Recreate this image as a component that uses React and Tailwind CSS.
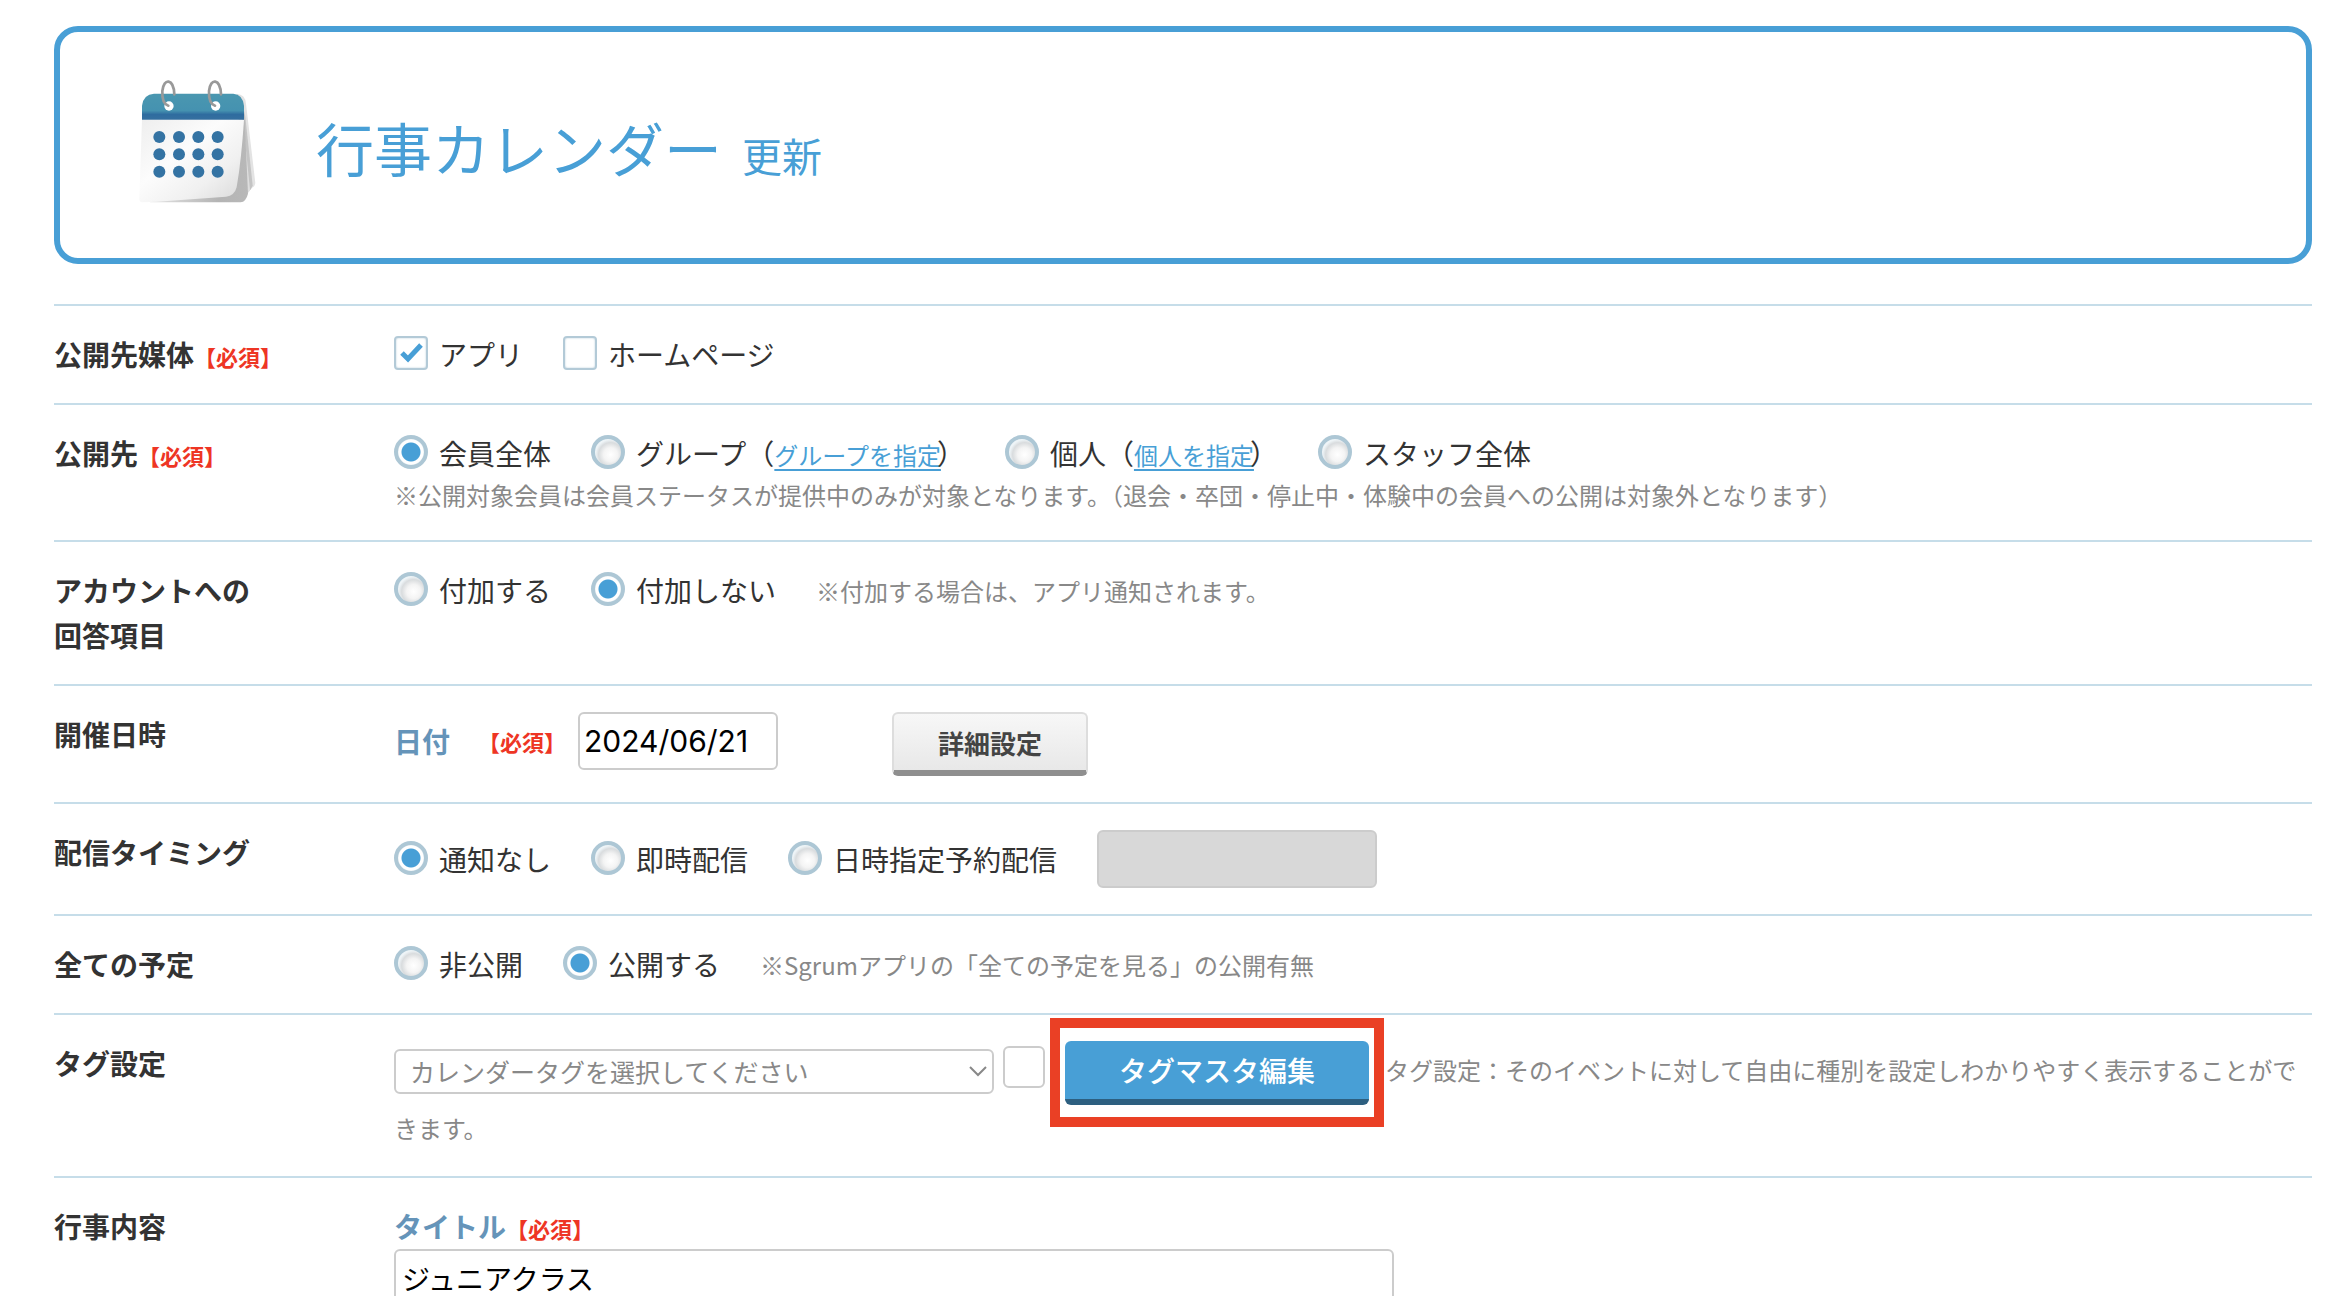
import { useState } from 'react';

function CalendarIcon() {
  const cols = [118, 177, 235, 293];
  const rows = [200, 252, 304];

  return (
    <svg className="mb-2 h-[124px] w-[118px] shrink-0" viewBox="54 26 354 372" aria-hidden="true">
      <defs>
        <linearGradient id="calTop" x1="0" y1="0" x2="0" y2="1">
          <stop offset="0" stopColor="#4a97b0" />
          <stop offset="0.65" stopColor="#4592b0" />
          <stop offset="0.8" stopColor="#2f6c9f" />
          <stop offset="1" stopColor="#356f9f" />
        </linearGradient>
        <linearGradient id="calPage" x1="0" y1="0" x2="1" y2="1">
          <stop offset="0" stopColor="#eeeeee" />
          <stop offset="0.4" stopColor="#fcfcfc" />
          <stop offset="0.7" stopColor="#f0f0f0" />
          <stop offset="1" stopColor="#d8d8d8" />
        </linearGradient>
        <linearGradient id="calFold" x1="0" y1="0" x2="1" y2="0">
          <stop offset="0" stopColor="#e4e4e4" />
          <stop offset="0.7" stopColor="#b4b4b4" />
          <stop offset="1" stopColor="#b8b8b8" />
        </linearGradient>
      </defs>
      {/* pages behind */}
      <path d="M350 70 Q376 72 378 100 L406 338 Q404 350 396 352 L370 330 Z" fill="#e3e3e3" />
      <path d="M365 90 L376 140 L398 345 Q394 360 386 362 L370 330 Z" fill="#c4c4c4" />
      <path d="M368 140 L390 358 Q388 368 380 370 L370 330 Z" fill="#dedede" />
      <path d="M370 150 L374 150 L384 370 Q378 394 362 396 L90 396 Z" fill="url(#calFold)" />
      {/* front page */}
      <path d="M66 148 L372 148 Q364 270 350 350 Q344 376 318 379 L110 394 L66 396 Q58 395 58 386 Z" fill="url(#calPage)" />
      <path d="M66 148 V106 Q70 72 102 70 H340 Q368 72 372 106 V148 Z" fill="url(#calTop)" />
      {rows.map((y) => cols.map((x) => <circle key={`${x}-${y}`} cx={x} cy={y} r="18" fill="#3473a3" />))}
      {[146, 286].map((x) => (
        <g key={x}>
          <circle cx={x + 1} cy="107" r="14" fill="#ffffff" />
          <path
            d={`M${x + 17} 72 C${x + 15} 24 ${x - 15} 22 ${x - 19} 62 C${x - 20} 84 ${x - 14} 102 ${x - 1} 106`}
            fill="none"
            stroke="#999999"
            strokeWidth="8"
            strokeLinecap="round"
          />
        </g>
      ))}
    </svg>
  );
}

function Required() {
  return <span className="text-[22px] leading-none font-bold text-[#ee3524]">【必須】</span>;
}

function Row({ label, required, children }) {
  return (
    <div className="flex border-t-2 border-[#c6dde9] py-[26px]">
      <div className="w-[340px] shrink-0 font-bold">
        {label}
        {required && <Required />}
      </div>
      <div className="min-w-0 flex-1">{children}</div>
    </div>
  );
}

function Radio({ name, value, current, onChange, children }) {
  const id = `${name}-${value}`;

  return (
    <div className="flex items-center gap-[11px]">
      <input
        type="radio"
        id={id}
        name={name}
        checked={current === value}
        onChange={() => onChange(value)}
        className="mb-[3px] size-[34px] shrink-0 appearance-none rounded-full border-4 border-[#adc7d5] bg-[radial-gradient(circle_at_60%_60%,#ffffff_0,#f4f4f4_7px,#d9dcde_12px,#eef4f7_15px)] checked:bg-[radial-gradient(circle,#489fd6_0,#489fd6_9px,#ffffff_10px,#ffffff_12px,#dbe7ee_14px)]"
      />
      <label htmlFor={id}>{children}</label>
    </div>
  );
}

function PickLink({ href, children }) {
  return (
    <a href={href} className="-mr-1 text-2xl leading-none text-[#489fd6] underline decoration-2 underline-offset-4">
      {children}
    </a>
  );
}

function Checkbox({ id, checked, onChange, children }) {
  return (
    <div className="flex items-center gap-[11px]">
      <span className="relative mb-[3px] flex">
        <input
          type="checkbox"
          id={id}
          checked={checked}
          onChange={(e) => onChange(e.target.checked)}
          className="size-[34px] appearance-none rounded-[4px] border-2 border-[#b3cad7] bg-white shadow-[inset_0_0_2px_#b3cad7]"
        />
        {checked && (
          <svg className="pointer-events-none absolute inset-0 size-[34px]" viewBox="0 0 34 34" aria-hidden="true">
            <path d="M8 17 L14 23 L27 9" fill="none" stroke="#489fd6" strokeWidth="5" />
          </svg>
        )}
      </span>
      <label htmlFor={id}>{children}</label>
    </div>
  );
}

export default function App() {
  const [media, setMedia] = useState({ app: true, homepage: false });
  const [target, setTarget] = useState('all');
  const [answer, setAnswer] = useState('off');
  const [timing, setTiming] = useState('none');
  const [schedule, setSchedule] = useState('public');
  const [date, setDate] = useState('2024/06/21');
  const [title, setTitle] = useState('ジュニアクラス');

  return (
    <div
      lang="ja"
      className="h-screen overflow-x-hidden overflow-y-auto bg-white pt-[26px] pr-9 pl-[54px] font-['Noto_Sans_CJK_JP',sans-serif] text-[28px] leading-[45px] text-[#333333] [scrollbar-width:none]"
    >
      {/* Header */}
      <header className="mb-10 flex h-[238px] items-center gap-[60px] rounded-3xl border-[6px] border-[#489fd6] px-[78px]">
        <CalendarIcon />
        <h1 className="pt-3 text-[58px] leading-[80px] text-[#489fd6]">
          行事カレンダー<span className="ml-5 text-[40px]">更新</span>
        </h1>
      </header>

      {/* Form */}
      <form onSubmit={(e) => e.preventDefault()}>
        <Row label="公開先媒体" required>
          <div className="flex items-center gap-10">
            <Checkbox id="media-app" checked={media.app} onChange={(v) => setMedia({ ...media, app: v })}>
              アプリ
            </Checkbox>
            <Checkbox id="media-homepage" checked={media.homepage} onChange={(v) => setMedia({ ...media, homepage: v })}>
              ホームページ
            </Checkbox>
          </div>
        </Row>

        <Row label="公開先" required>
          <div className="flex items-center gap-10">
            <Radio name="target" value="all" current={target} onChange={setTarget}>会員全体</Radio>
            <Radio name="target" value="group" current={target} onChange={setTarget}>
              グループ（<PickLink href="#group">グループを指定</PickLink>）
            </Radio>
            <Radio name="target" value="person" current={target} onChange={setTarget}>
              個人（<PickLink href="#person">個人を指定</PickLink>）
            </Radio>
            <Radio name="target" value="staff" current={target} onChange={setTarget}>スタッフ全体</Radio>
          </div>
          <p className="text-2xl leading-[38px] text-[#888888]">
            ※公開対象会員は会員ステータスが提供中のみが対象となります。（退会・卒団・停止中・体験中の会員への公開は対象外となります）
          </p>
        </Row>

        <Row label={<>アカウントへの<br />回答項目</>}>
          <div className="flex items-center gap-10">
            <Radio name="answer" value="on" current={answer} onChange={setAnswer}>付加する</Radio>
            <Radio name="answer" value="off" current={answer} onChange={setAnswer}>付加しない</Radio>
            <span className="text-2xl text-[#888888]">※付加する場合は、アプリ通知されます。</span>
          </div>
        </Row>

        <Row label="開催日時">
          <div className="flex items-start">
            <div className="flex h-[58px] items-center">
              <label htmlFor="date" className="mr-7 font-bold text-[#6594b9]">日付</label>
              <Required />
              <input
                id="date"
                type="text"
                value={date}
                onChange={(e) => setDate(e.target.value)}
                className="ml-3 h-[58px] w-[200px] rounded-md border-2 border-[#cccccc] px-1 font-['Inter','Noto_Sans_CJK_JP',sans-serif] text-3xl text-black"
              />
            </div>
            <button
              type="button"
              className="ml-[114px] h-16 w-[196px] rounded-md border-2 border-b-[6px] border-[#dddddd] border-b-[#8f8f8f] bg-linear-to-b from-[#f7f7f7] to-[#e8e8e8] text-[26px] font-bold text-[#444444]"
            >
              詳細設定
            </button>
          </div>
        </Row>

        <Row label="配信タイミング">
          <div className="flex items-center gap-10">
            <Radio name="timing" value="none" current={timing} onChange={setTiming}>通知なし</Radio>
            <Radio name="timing" value="now" current={timing} onChange={setTiming}>即時配信</Radio>
            <Radio name="timing" value="reserve" current={timing} onChange={setTiming}>日時指定予約配信</Radio>
            <input
              type="text"
              disabled
              aria-label="予約配信日時"
              className="h-[58px] w-[280px] rounded-md border-2 border-[#cccccc] bg-[#d8d8d8]"
            />
          </div>
        </Row>

        <Row label="全ての予定">
          <div className="flex items-center gap-10">
            <Radio name="schedule" value="private" current={schedule} onChange={setSchedule}>非公開</Radio>
            <Radio name="schedule" value="public" current={schedule} onChange={setSchedule}>公開する</Radio>
            <span className="text-2xl text-[#888888]">※Sgrumアプリの「全ての予定を見る」の公開有無</span>
          </div>
        </Row>

        <Row label="タグ設定">
          <div className="text-2xl leading-[45px] text-[#888888]">
            <span className="relative mr-[9px] mb-1 inline-flex align-middle">
              <select
                aria-label="カレンダータグ"
                className="h-[45px] w-[600px] appearance-none rounded-md border-2 border-[#cccccc] bg-white pl-[14px] text-[25px] leading-9"
              >
                <option>カレンダータグを選択してください</option>
              </select>
              <svg className="pointer-events-none absolute top-4 right-[7px] h-3 w-[18px]" viewBox="0 0 18 12" aria-hidden="true">
                <path d="M1 2 L9 10 L17 2" fill="none" stroke="#888888" strokeWidth="2" />
              </svg>
            </span>
            <input
              type="text"
              aria-label="タグの色"
              className="mr-5 mb-3 h-[42px] w-[42px] rounded-md border-2 border-[#cccccc] align-middle"
            />
            <span className="relative mr-4 inline-flex align-middle">
              <button
                type="button"
                className="h-16 w-[304px] rounded-md border-b-[6px] border-[#2d5f80] bg-[#489fd6] text-[28px] font-medium text-white"
              >
                タグマスタ編集
              </button>
              <span className="pointer-events-none absolute -inset-x-[15px] -top-[23px] -bottom-[22px] border-[10px] border-[#ea4025]" />
            </span>
            タグ設定：そのイベントに対して自由に種別を設定しわかりやすく表示することができます。
          </div>
        </Row>

        <Row label="行事内容">
          <label htmlFor="title" className="font-bold text-[#6594b9]">タイトル</label>
          <Required />
          <input
            id="title"
            type="text"
            value={title}
            onChange={(e) => setTitle(e.target.value)}
            className="block h-[58px] w-[1000px] max-w-full rounded-md border-2 border-[#cccccc] px-[6px] text-[28px] text-black"
          />
        </Row>
      </form>
    </div>
  );
}
